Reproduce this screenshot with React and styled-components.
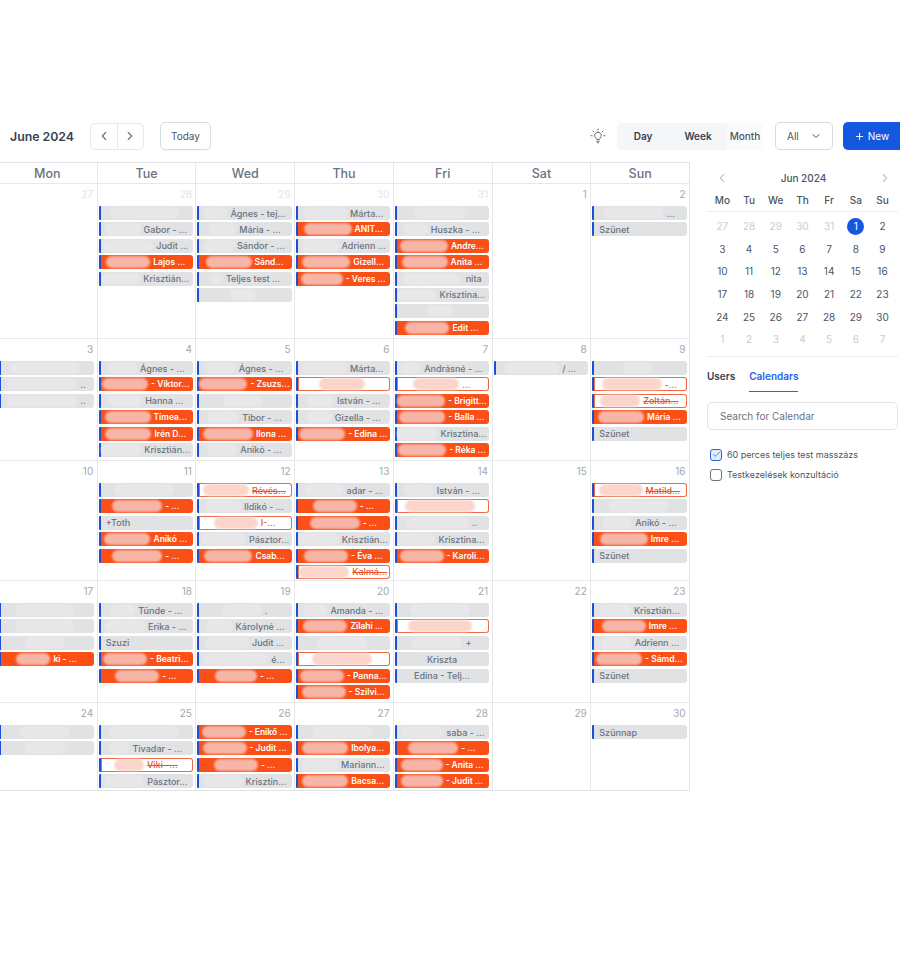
import React from 'react'
import styled, { createGlobalStyle } from 'styled-components'
import { ChevronLeft, ChevronRight, ChevronDown, Plus, Check } from 'lucide-react'

const Global = createGlobalStyle`
  html, body { margin: 0; padding: 0; background: #fff; }
  body { font-family: Inter, "Liberation Sans", sans-serif; overflow: hidden; }
`

const Page = styled.div`
  width: 900px;
  height: 975px;
  padding-top: 122px;
  box-sizing: border-box;
  overflow: hidden;
`

const Toolbar = styled.div`
  display: flex;
  align-items: center;
  height: 28px;
  padding-left: 10px;
`

const Heading = styled.div`
  width: 80px;
  font-size: 12.3px;
  font-weight: 600;
  color: #374151;
`

const NavGroup = styled.div`
  display: flex;
  width: 54px;
  height: 27px;
  border: 1px solid #e5e7eb;
  border-radius: 5px;
  box-sizing: border-box;
  color: #6b7280;
`

const NavBtn = styled.div`
  flex: 1;
  display: flex;
  align-items: center;
  justify-content: center;
  & + & { border-left: 1px solid #e5e7eb; }
`

const TodayBtn = styled.div`
  margin-left: 16px;
  width: 51px;
  height: 28px;
  box-sizing: border-box;
  border: 1px solid #d9dce1;
  border-radius: 5px;
  display: flex;
  align-items: center;
  justify-content: center;
  font-size: 10px;
  font-weight: 400;
  color: #4b5563;
  box-shadow: 0 1px 1px rgba(0, 0, 0, 0.04);
`

const Bulb = styled.div`
  margin-left: auto;
  margin-right: 11px;
  display: flex;
  color: #6b7280;
`

const Segments = styled.div`
  display: flex;
  width: 146px;
  height: 27px;
  background: #f5f6f7;
  border-radius: 5px;
`

const Segment = styled.div`
  width: ${p => p.$w}px;
  display: flex;
  align-items: center;
  justify-content: center;
  font-size: 10px;
  font-weight: ${p => (p.$active ? 500 : 600)};
  color: ${p => (p.$active ? '#4b5563' : '#374151')};
  background: ${p => (p.$active ? '#fafbfc' : 'transparent')};
  border-radius: 0 4px 4px 0;
`

const Select = styled.div`
  margin-left: 12px;
  width: 58px;
  height: 28px;
  box-sizing: border-box;
  border: 1px solid #d9dce1;
  border-radius: 5px;
  display: flex;
  align-items: center;
  justify-content: space-between;
  padding: 0 10px 0 11px;
  font-size: 10px;
  font-weight: 400;
  color: #4b5563;
`

const NewBtn = styled.div`
  margin-left: 10px;
  width: 57px;
  height: 28px;
  background: #1558e0;
  border-radius: 5px 0 0 5px;
  color: #fff;
  display: flex;
  align-items: center;
  justify-content: center;
  gap: 3px;
  font-size: 10px;
  font-weight: 400;
`

const Body = styled.div`
  display: flex;
  margin-top: 12px;
`

const Calendar = styled.div`
  flex: none;
  width: 692px;
  margin-left: -2px;
  border-top: 1px solid #dfe2e6;
  border-bottom: 1px solid #dfe2e6;
  border-right: 1px solid #dfe2e6;
  box-sizing: border-box;
`

const Days = styled.div`
  display: grid;
  grid-template-columns: repeat(7, 1fr);
  height: 21px;
  box-sizing: border-box;
  border-bottom: 1px solid #e5e7eb;
`

const DayName = styled.div`
  display: flex;
  align-items: center;
  justify-content: center;
  font-size: 12.5px;
  font-weight: 500;
  color: #6b7280;
  & + & { border-left: 1px solid #e5e7eb; }
`

const Week = styled.div`
  display: grid;
  grid-template-columns: repeat(7, 1fr);
  height: ${p => p.$h}px;
  & + & { box-shadow: 0 -1px 0 #e8eaed; }
`

const Cell = styled.div`
  min-width: 0;
  padding: 5px 2.5px 0 0;
  box-sizing: border-box;
  & + & { border-left: 1px solid #e5e7eb; }
`

const DateNo = styled.div`
  height: 17px;
  padding-right: 1px;
  text-align: right;
  font-size: 10px;
  line-height: 11px;
  color: ${p => (p.$muted ? '#e3e4e7' : '#a3a7ae')};
`

const Events = styled.div`
  display: flex;
  flex-direction: column;
  gap: 2.4px;
`

const chipColors = {
  gray: 'background: #e1e2e4; color: #6b7280;',
  orange: 'background: #fa5018; color: #fff; font-weight: 600; font-size: 8.5px;',
  white: 'background: #fff; color: #e4572e; font-weight: 500; box-shadow: inset 0 0 0 1px #ee6a44;',
}

const blobColors = {
  gray: '#e8e8ea',
  orange: '#f7b5a8',
  white: '#fbd5cb',
}

const Chip = styled.div`
  height: 14px;
  margin-left: 1px;
  display: flex;
  align-items: center;
  justify-content: ${p => (p.$left ? 'flex-start' : 'center')};
  gap: 3px;
  padding: 0 7px 0 5px;
  box-sizing: border-box;
  border-left: 2.5px solid #1d4ed8;
  border-radius: 1px 3px 3px 1px;
  font-size: 9px;
  font-weight: 500;
  white-space: nowrap;
  ${p => chipColors[p.$kind]}
`

const Blob = styled.span`
  flex: none;
  width: ${p => p.$w}px;
  height: 12px;
  border-radius: 6px;
  background: ${p => blobColors[p.$kind]};
  filter: blur(1px);
`

const Label = styled.span`
  text-decoration: ${p => (p.$strike ? 'line-through' : 'none')};
`

const Side = styled.div`
  flex: none;
  width: 191px;
  margin-left: 17px;
`

const MonthBar = styled.div`
  display: flex;
  align-items: center;
  justify-content: space-between;
  height: 32px;
  padding: 0 6px 0 8px;
  font-size: 10px;
  font-weight: 500;
  color: #4b5563;
  svg { color: #c4c7cc; }
`

const MiniHead = styled.div`
  display: grid;
  grid-template-columns: repeat(7, 26.7px);
  height: 17px;
  padding-left: 2px;
  border-bottom: 1px solid #eceef0;
  font-size: 10px;
  font-weight: 500;
  color: #4b5563;
  text-align: center;
`

const MiniGrid = styled.div`
  display: grid;
  grid-template-columns: repeat(7, 26.7px);
  grid-auto-rows: 22.6px;
  margin-top: 3px;
  padding: 0 0 5px 2px;
  border-bottom: 1px solid #eceef0;
`

const MiniDay = styled.div`
  display: flex;
  align-items: center;
  justify-content: center;
  font-size: 10px;
  color: ${p => (p.$muted ? '#c9ccd1' : '#4b5563')};
`

const Today = styled.span`
  width: 17px;
  height: 17px;
  border-radius: 50%;
  background: #1558e0;
  color: #fff;
  display: flex;
  align-items: center;
  justify-content: center;
`

const Tabs = styled.div`
  display: flex;
  gap: 14px;
  height: 35px;
  font-size: 10px;
  font-weight: 600;
`

const Tab = styled.div`
  display: flex;
  align-items: center;
  height: 35px;
  padding-top: 4px;
  color: ${p => (p.$active ? '#2563eb' : '#374151')};
  box-sizing: border-box;
  border-bottom: 1px solid ${p => (p.$active ? '#2563eb' : 'transparent')};
`

const Search = styled.div`
  margin-top: 10px;
  height: 28px;
  box-sizing: border-box;
  border: 1px solid #e2e4e8;
  border-radius: 5px;
  display: flex;
  align-items: center;
  padding-left: 12px;
  font-size: 10px;
  color: #6b7280;
`

const Options = styled.div`
  margin-top: 19px;
  padding-left: 3px;
  display: flex;
  flex-direction: column;
  gap: 8px;
`

const Option = styled.label`
  display: flex;
  align-items: center;
  gap: 5px;
  height: 12px;
  font-size: 9px;
  color: #4b5563;
`

const Box = styled.span`
  width: 12px;
  height: 12px;
  box-sizing: border-box;
  border-radius: 3px;
  border: 1px solid ${p => (p.$on ? '#2563eb' : '#6b7280')};
  background: ${p => (p.$on ? '#e4ecfd' : '#fff')};
  display: flex;
  align-items: center;
  justify-content: center;
  color: #2563eb;
`

// kind, label, width of the blurred part, [left aligned] [struck through]
const g = (t, w = 0, o = {}) => ({ k: 'gray', t, w, ...o })
const r = (t, w = 0, o = {}) => ({ k: 'orange', t, w, ...o })
const x = (t, w = 0, o = {}) => ({ k: 'white', t, w, ...o })

const weeks = [
  {
    h: 155,
    days: [
      [27, true, []],
      [28, true, [g('', 70), g('Gabor - ...', 36), g('Judit ...', 50), r('Lajos ...', 44), g('Krisztián...', 38)]],
      [29, true, [g('Ágnes - tej...', 24), g('Mária - ...', 28), g('Sándor - ...', 30), r('Sánd...', 46), g('Teljes test ...', 14), g('', 26)]],
      [30, true, [g('Márta...', 44), r('ANIT...', 48), g('Adrienn ...', 38), r('Gizell...', 48), r('- Veres ...', 42)]],
      [31, true, [g('', 50), g('Huszka - ...', 24), r('Andre...', 48), r('Anita ...', 46), g('\u00a0nita', 58), g('Krisztina...', 38), g('', 26), r('Edit ...', 44)]],
      [1, false, []],
      [2, false, [g('...', 60), g('Szünet', 0, { left: true })]],
    ],
  },
  {
    h: 122,
    days: [
      [3, false, [g('', 70), g('..', 70), g('..', 70)]],
      [4, false, [g('Ágnes - ...', 30), r('- Viktor...', 46), g('Hanna ...', 34), r('Tímea...', 46), r('Irén D...', 46), g('Krisztián...', 40)]],
      [5, false, [g('Ágnes - ...', 30), r('- Zsuzs...', 48), g('', 40), g('Tibor - ...', 32), r('Ilona ...', 50), g('Anikó - ...', 30)]],
      [6, false, [g('Márta...', 44), x('', 46), g('István - ...', 28), g('Gizella - ...', 26), r('- Edina ...', 46)]],
      [7, false, [g('Andrásné - ...', 20), x('...', 46), r('- Brigitt...', 48), r('- Balla ...', 46), g('Krisztina...', 40), r('- Réka ...', 48)]],
      [8, false, [g('/ ...', 54)]],
      [9, false, [g('', 30), x('-...', 60), x('Zoltán...', 40, { strike: true }), r('Mária ...', 46), g('Szünet', 0, { left: true })]],
    ],
  },
  {
    h: 120,
    days: [
      [10, false, []],
      [11, false, [g('', 60), r('- ...', 50), g('+Toth', 0, { left: true }), r('Anikó ...', 46), r('- ...', 50)]],
      [12, false, [x('Révés...', 46, { strike: true }), g('Ildikó - ...', 36), x('I-...', 44), g('Pásztor...', 46), r('Csab...', 48)]],
      [13, false, [g('adar - ...', 40), r('- ...', 44), r('- ...', 50), g('Krisztián...', 40), r('- Éva ...', 44), x('Kalmá...', 50, { strike: true })]],
      [14, false, [g('István - ...', 30), x('', 70), g('..', 62), g('Krisztina...', 36), r('- Karoli...', 44)]],
      [15, false, []],
      [16, false, [x('Matild...', 44, { strike: true }), g('', 60), g('Anikó - ...', 30), r('Imre ...', 48), g('Szünet', 0, { left: true })]],
    ],
  },
  {
    h: 122,
    days: [
      [17, false, [g('', 60), g('', 60), g('', 40), r('ki - ...', 34)]],
      [18, false, [g('Tünde - ...', 26), g('Erika - ...', 40), g('Szuzi', 0, { left: true }), r('- Beatri...', 44), r('- ...', 44)]],
      [19, false, [g('.', 40), g('Károlyné ...', 28), g('Judit ...', 44), g('é...', 64), r('- ...', 42)]],
      [20, false, [g('Amanda - ...', 24), r('Zilahi ...', 44), g('', 50), x('', 60), r('- Panna...', 44), r('- Szilvi...', 44)]],
      [21, false, [g('', 60), x('', 64), g('+', 50), g('Kriszta', 0), g('Edina - Telj...', 0)]],
      [22, false, []],
      [23, false, [g('Krisztián...', 32), r('Imre ...', 44), g('Adrienn ...', 32), r('- Sámd...', 46), g('Szünet', 0, { left: true })]],
    ],
  },
  {
    h: 87,
    days: [
      [24, false, [g('', 50), g('', 40)]],
      [25, false, [g('', 70), g('Tivadar - ...', 20), x('Viki -...', 30, { strike: true }), g('Pásztor...', 40)]],
      [26, false, [r('- Enikő ...', 44), r('- Judit ...', 44), r('- ...', 44), g('Krisztin...', 40)]],
      [27, false, [g('', 60), r('Ibolya...', 46), g('Mariann...', 36), r('Bacsa...', 46)]],
      [28, false, [g('saba - ...', 44), r('- ...', 50), r('- Anita ...', 42), r('- Judit ...', 42)]],
      [29, false, []],
      [30, false, [g('Szünnap', 0, { left: true })]],
    ],
  },
]

const dayNames = ['Mon', 'Tue', 'Wed', 'Thu', 'Fri', 'Sat', 'Sun']
const miniNames = ['Mo', 'Tu', 'We', 'Th', 'Fr', 'Sa', 'Su']
const miniDays = [27, 28, 29, 30, 31, 1, 2, 3, 4, 5, 6, 7, 8, 9, 10, 11, 12, 13, 14, 15, 16, 17, 18, 19, 20, 21, 22, 23, 24, 25, 26, 27, 28, 29, 30, 1, 2, 3, 4, 5, 6, 7]

const BulbIcon = () => (
  <svg width="16" height="16" viewBox="0 0 16 16" fill="none" stroke="currentColor" strokeWidth="1" strokeLinecap="round">
    <path d="M8 4.2a3.4 3.4 0 0 0-2 6.1c.4.3.6.7.6 1.2h2.8c0-.5.2-.9.6-1.2a3.4 3.4 0 0 0-2-6.1z" />
    <path d="M6.7 13.2h2.6M7.3 14.7h1.4" />
    <path d="M8 1v1.2M3 3l.9.9M13 3l-.9.9M1 7.7h1.2M13.8 7.7H15" />
  </svg>
)

const Event = ({ e }) => (
  <Chip $kind={e.k} $left={e.left}>
    {e.w > 0 && <Blob $kind={e.k} $w={e.w} />}
    <Label $strike={e.strike}>{e.t}</Label>
  </Chip>
)

export default function App() {
  return (
    <Page>
      <Global />
      <Toolbar>
        <Heading>June 2024</Heading>
        <NavGroup>
          <NavBtn><ChevronLeft size={14} /></NavBtn>
          <NavBtn><ChevronRight size={14} /></NavBtn>
        </NavGroup>
        <TodayBtn>Today</TodayBtn>
        <Bulb><BulbIcon /></Bulb>
        <Segments>
          <Segment $w={52}>Day</Segment>
          <Segment $w={58}>Week</Segment>
          <Segment $w={36} $active>Month</Segment>
        </Segments>
        <Select>All <ChevronDown size={12} /></Select>
        <NewBtn><Plus size={11} /> New</NewBtn>
      </Toolbar>
      <Body>
        <Calendar>
          <Days>
            {dayNames.map(d => <DayName key={d}>{d}</DayName>)}
          </Days>
          {weeks.map((w, i) => (
            <Week key={i} $h={w.h}>
              {w.days.map(([n, muted, events]) => (
                <Cell key={n}>
                  <DateNo $muted={muted}>{n}</DateNo>
                  <Events>
                    {events.map((e, j) => <Event key={j} e={e} />)}
                  </Events>
                </Cell>
              ))}
            </Week>
          ))}
        </Calendar>
        <Side>
          <MonthBar>
            <ChevronLeft size={14} />
            Jun 2024
            <ChevronRight size={14} />
          </MonthBar>
          <MiniHead>
            {miniNames.map(d => <div key={d}>{d}</div>)}
          </MiniHead>
          <MiniGrid>
            {miniDays.map((d, i) => {
              const muted = i < 5 || i > 34
              return (
                <MiniDay key={i} $muted={muted}>
                  {i === 5 ? <Today>{d}</Today> : d}
                </MiniDay>
              )
            })}
          </MiniGrid>
          <Tabs>
            <Tab>Users</Tab>
            <Tab $active>Calendars</Tab>
          </Tabs>
          <Search>Search for Calendar</Search>
          <Options>
            <Option><Box $on><Check size={9} strokeWidth={2} /></Box>60 perces teljes test masszázs</Option>
            <Option><Box />Testkezelések konzultáció</Option>
          </Options>
        </Side>
      </Body>
    </Page>
  )
}
